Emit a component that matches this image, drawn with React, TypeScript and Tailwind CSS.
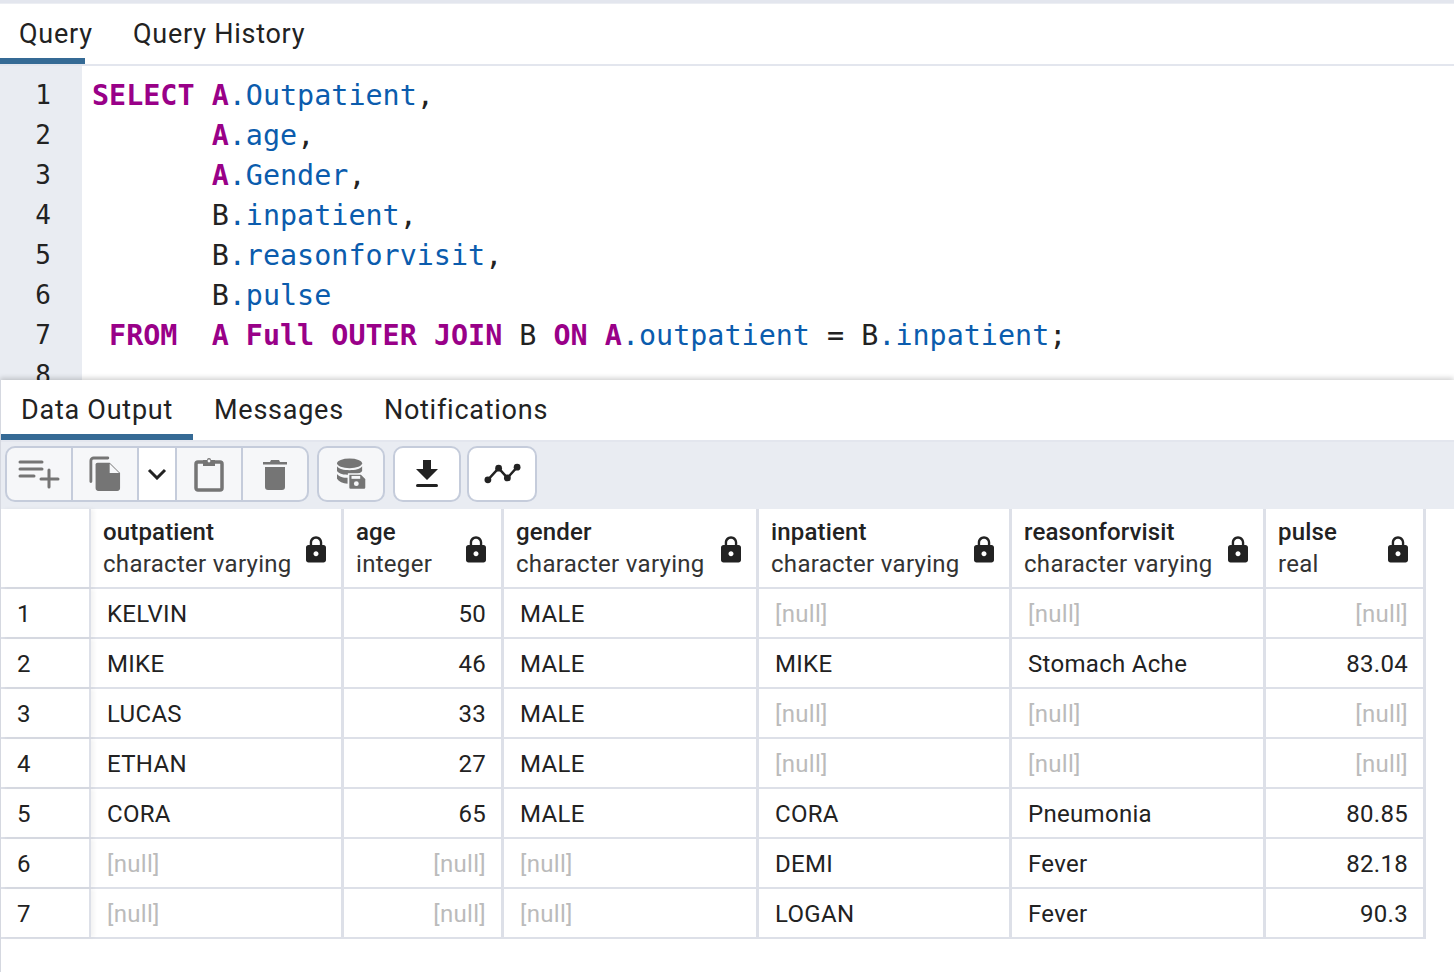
import { MdLock } from "react-icons/md";

const columns = [
  { name: "outpatient", type: "character varying" },
  { name: "age", type: "integer" },
  { name: "gender", type: "character varying" },
  { name: "inpatient", type: "character varying" },
  { name: "reasonforvisit", type: "character varying" },
  { name: "pulse", type: "real" },
];

const rows: (string | null)[][] = [
  ["KELVIN", "50", "MALE", null, null, null],
  ["MIKE", "46", "MALE", "MIKE", "Stomach Ache", "83.04"],
  ["LUCAS", "33", "MALE", null, null, null],
  ["ETHAN", "27", "MALE", null, null, null],
  ["CORA", "65", "MALE", "CORA", "Pneumonia", "80.85"],
  [null, null, null, "DEMI", "Fever", "82.18"],
  [null, null, null, "LOGAN", "Fever", "90.3"],
];

const K = ({ children }: { children: string }) => <span className="font-bold text-[#990088]">{children}</span>;
const F = ({ children }: { children: string }) => <span className="text-[#0b5cad]">{children}</span>;

const codeLines = [
  <><K>SELECT</K> <K>A</K><F>.Outpatient</F>,</>,
  <>{"       "}<K>A</K><F>.age</F>,</>,
  <>{"       "}<K>A</K><F>.Gender</F>,</>,
  <>{"       "}B<F>.inpatient</F>,</>,
  <>{"       "}B<F>.reasonforvisit</F>,</>,
  <>{"       "}B<F>.pulse</F></>,
  <>{" "}<K>FROM</K>{"  "}<K>A</K> <K>Full</K> <K>OUTER</K> <K>JOIN</K> B <K>ON</K> <K>A</K><F>.outpatient</F> = B<F>.inpatient</F>;</>,
  <></>,
];

const ToolBtn = ({ children, active, className = "" }: { children: React.ReactNode; active?: boolean; className?: string }) => (
  <div className={`flex h-[56px] items-center justify-center border-2 border-[#c5ccdb] ${active ? "bg-white" : "bg-[#f6f7f9]"} ${className}`}>
    {children}
  </div>
);

const PlaylistIcon = () => (
  <svg width="42" height="30" viewBox="0 0 42 30" fill="none" stroke="#757575" strokeWidth="3" strokeLinecap="round">
    <path d="M2 3h22M2 10h22M2 17h14M31 11v17M23 20h17" />
  </svg>
);

const CopyIcon = () => (
  <svg width="32" height="36" viewBox="0 0 34 38" fill="none">
    <path d="M2 27V5a3 3 0 0 1 3-3h15" stroke="#757575" strokeWidth="3" strokeLinecap="round" />
    <path d="M9 7h13l11 11v16a3 3 0 0 1-3 3H10a3 3 0 0 1-3-3V9a2 2 0 0 1 2-2z" fill="#757575" />
    <path d="M22 8v10h10z" fill="#f6f7f9" />
  </svg>
);

const PasteIcon = () => (
  <svg width="30" height="36" viewBox="0 0 30 36" fill="none">
    <rect x="2" y="6" width="26" height="28" rx="2" stroke="#757575" strokeWidth="3.5" />
    <path d="M9 4h4a2 2 0 0 1 4 0h4v6H9z" fill="#757575" />
    <circle cx="15" cy="5" r="1.4" fill="#f6f7f9" />
  </svg>
);

const TrashIcon = () => (
  <svg width="24" height="32" viewBox="0 0 24 32">
    <path d="M0 4h7l1-2h8l1 2h7v2.500H0z" fill="#757575" />
    <path d="M2 9h20v20a3 3 0 0 1-3 3H5a3 3 0 0 1-3-3z" fill="#757575" />
  </svg>
);

const DbIcon = () => (
  <svg width="29" height="32" viewBox="0 0 30 32">
    <ellipse cx="13" cy="5" rx="13" ry="5" fill="#757575" />
    <path d="M0 8c2 3 7 4 13 4s11-1 13-4v5c-2 3-7 4-13 4S2 16 0 13z" fill="#757575" />
    <path d="M0 16c2 3 7 4 11 4v6C6 26 2 24 0 21z" fill="#757575" />
    <path d="M12 16h13l5 5v9a2 2 0 0 1-2 2H14a2 2 0 0 1-2-2z" fill="#757575" stroke="#f6f7f9" strokeWidth="1.500" />
    <rect x="15" y="18" width="9" height="3" fill="#f6f7f9" />
    <circle cx="20" cy="26" r="2.500" fill="#f6f7f9" />
  </svg>
);

const DownloadIcon = () => (
  <svg width="24" height="28" viewBox="0 0 24 28">
    <path d="M8 0h8v9h7L12 20 1 9h7z" fill="#222" />
    <rect x="1" y="24" width="22" height="3" rx="1.500" fill="#222" />
  </svg>
);

const ChartIcon = () => (
  <svg width="37" height="22" viewBox="0 0 38 22" fill="none">
    <path d="M4 17L15 5l9 10L34 4" stroke="#222" strokeWidth="2.500" />
    <circle cx="4" cy="17" r="3.500" fill="#222" />
    <circle cx="15" cy="5" r="3.500" fill="#222" />
    <circle cx="24" cy="15" r="3.500" fill="#222" />
    <circle cx="34" cy="4" r="3.500" fill="#222" />
  </svg>
);

const grid = "grid grid-cols-[90px_253px_160px_255px_253px_254px_160px] w-[1425px]";
const rightCols = [1, 5];

export default function App() {
  return (
    <div className="h-[972px] w-[1454px] overflow-hidden bg-white font-['Roboto',sans-serif] text-[#222]">
      <div className="h-[4px] border-b border-[#eceef3] bg-[#e3e6ee]" />
      <div className="flex h-[62px] border-b-2 border-[#e3e6ee] text-[27px] tracking-[0.75px]">
        <div className="flex w-[113px] pl-[19px] pr-[20px]">
          <div className="-ml-[19px] w-[85px] border-b-[6px] border-[#356a95] pl-[19px] pt-[10px]">Query</div>
        </div>
        <div className="pt-[10px] pl-[20px]">Query History</div>
      </div>

      <div className="flex h-[314px] overflow-hidden">
        <div className="w-[82px] shrink-0 bg-[#e9ecf2] pt-[9px] pr-[31px] text-right font-['DejaVu_Sans_Mono',monospace] text-[26px] leading-[40px]">
          {codeLines.map((_, i) => (
            <div key={i}>{i + 1}</div>
          ))}
        </div>
        <div className="whitespace-pre pl-[10px] pt-[10px] font-['DejaVu_Sans_Mono',monospace] text-[28.4px] leading-[40px]">
          {codeLines.map((l, i) => (
            <div key={i} className="h-[40px]">{l}</div>
          ))}
        </div>
      </div>

      <div className="relative h-[592px] border-l border-[#d5d8e0] bg-white shadow-[0_-2px_5px_rgba(0,0,0,0.18)]">
        <div className="flex h-[62px] border-b-2 border-[#e3e6ee] text-[27px] tracking-[0.75px]">
          <div className="w-[192px] border-b-[6px] border-[#356a95] pl-[20px] pt-[10px]">Data Output</div>
          <div className="pl-[21px] pt-[10px]">Messages</div>
          <div className="pl-[40px] pt-[10px]">Notifications</div>
        </div>

        <div className="flex h-[67px] items-start bg-[#e9ecf2] pl-[4px] pt-[4px]">
          <ToolBtn className="w-[68px] rounded-l-[10px]"><PlaylistIcon /></ToolBtn>
          <ToolBtn className="-ml-[2px] w-[68px]"><CopyIcon /></ToolBtn>
          <ToolBtn active className="-ml-[2px] w-[40px]">
            <svg width="20" height="12" viewBox="0 0 20 12" fill="none"><path d="M2 2l8 8 8-8" stroke="#222" strokeWidth="3" /></svg>
          </ToolBtn>
          <ToolBtn className="-ml-[2px] w-[68px]"><PasteIcon /></ToolBtn>
          <ToolBtn className="-ml-[2px] w-[68px] rounded-r-[10px]"><TrashIcon /></ToolBtn>
          <ToolBtn className="ml-[8px] w-[68px] rounded-[10px]"><DbIcon /></ToolBtn>
          <ToolBtn active className="ml-[8px] w-[68px] rounded-[10px]"><DownloadIcon /></ToolBtn>
          <ToolBtn active className="ml-[6px] w-[70px] rounded-[10px]"><ChartIcon /></ToolBtn>
        </div>

        <div className={`${grid} h-[80px] border-b-2 border-[#dde0e8]`}>
          <div className="border-r-2 border-[#dde0e8] shadow-[3px_0_4px_rgba(0,0,0,0.05)]" />
          {columns.map((c) => (
            <div key={c.name} className="flex items-center justify-between border-r-[3px] border-[#dde0e8] pl-[12px] pr-[10px]">
              <div className="whitespace-nowrap text-[24px] leading-[32px]">
                <div className="font-medium tracking-[0.15px]">{c.name}</div>
                <div className="tracking-[0.3px] text-[#333]">{c.type}</div>
              </div>
              <MdLock size={30} color="#222" className="mt-[4px] shrink-0" />
            </div>
          ))}
        </div>

        {rows.map((r, i) => (
          <div key={i} className={`${grid} h-[50px] border-b-2 border-[#dde0e8] text-[24px] tracking-[0.3px]`}>
            <div className="flex items-center border-r-2 border-[#dde0e8] pl-[16px] pt-[2px] shadow-[3px_0_4px_rgba(0,0,0,0.05)]">{i + 1}</div>
            {r.map((v, j) => (
              <div
                key={j}
                className={`flex items-center border-r-[3px] border-[#dde0e8] pl-[16px] pr-[15px] pt-[2px] ${rightCols.includes(j) ? "justify-end" : ""} ${v === null ? "text-[#bbbbbb]" : ""}`}
              >
                {v === null ? "[null]" : v}
              </div>
            ))}
          </div>
        ))}
      </div>
    </div>
  );
}
